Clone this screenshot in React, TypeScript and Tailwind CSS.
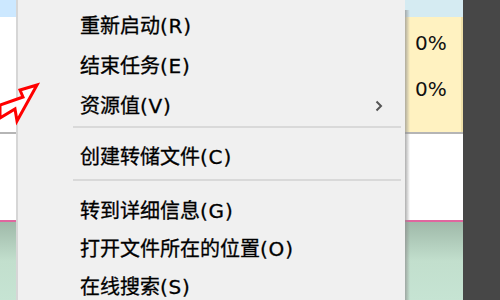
import React from 'react';

const font = { fontFamily: '"Microsoft YaHei", "Noto Sans CJK SC", "Noto Sans", sans-serif' };

const Item: React.FC<{ label: string; hotkey: string; sub?: boolean; h?: string }> = ({ label, hotkey, sub, h = 'h-[40px]' }) => (
  <div className={`${h} flex items-center pl-[62px] pr-[22px] text-black justify-between`}>
    <span className="leading-none text-[20px] whitespace-nowrap [-webkit-text-stroke:0.3px_#000]">
      {label}
      <span className="font-['DejaVu_Sans'] text-[20px] tracking-[0.8px]">({hotkey})</span>
    </span>
    {sub && (
      <svg width="8" height="12" viewBox="0 0 8 12" className="mt-[1px]">
        <path d="M1.5 1.5 L6 6 L1.5 10.5" fill="none" stroke="#555" strokeWidth="2" />
      </svg>
    )}
  </div>
);

const Sep: React.FC<{ cls: string }> = ({ cls }) => (
  <div className={`${cls} pl-[55px] pr-[4px]`}>
    <div className="h-[2px] w-full bg-[#d9d9d9]" />
  </div>
);

const Bands: React.FC<{ top: string; children?: React.ReactNode; band: string }> = ({ top, band, children }) => (
  <div className="flex flex-col h-full">
    <div className={`h-[17px] ${top}`} />
    <div className={`flex-none h-[115px] ${band}`}>{children}</div>
    <div className="h-[2px] bg-[#b5b5b5]" />
    <div className="h-[86px] bg-white" />
    <div className="h-[2px] bg-[#e0679f]" />
    <div className="flex-1 bg-gradient-to-b from-[#9fb9a9] via-[#c2dfcd] to-[#c6e4d3]" />
  </div>
);

export default function App() {
  return (
    <div className="relative w-[500px] h-[300px] overflow-hidden flex bg-white" style={font}>
      <div className="w-[16px] h-full">
        <Bands top="bg-[#cce8ff]" band="bg-white" />
      </div>

      <div className="w-[389px] h-full bg-[#f0f0f0] border-l-2 border-[#d6d6d6] pt-[5px]">
        <Item label="重新启动" hotkey="R" />
        <Item label="结束任务" hotkey="E" />
        <Item label="资源值" hotkey="V" sub />
        <Sep cls="h-[11px] pt-[1px]" />
        <Item label="创建转储文件" hotkey="C" />
        <Sep cls="h-[15px] pt-[3px]" />
        <Item label="转到详细信息" hotkey="G" h="h-[38px]" />
        <Item label="打开文件所在的位置" hotkey="O" h="h-[38px]" />
        <Item label="在线搜索" hotkey="S" h="h-[38px]" />
      </div>

      <div className="relative w-[58px] h-full">
        <Bands top="bg-[#d5ebf2]" band="bg-[#fff2c1] border-r-2 border-[#efe0a8]">
          <div className="flex flex-col pl-[10px] pt-[16px] gap-[26px] text-[20px] text-[#111] font-['DejaVu_Sans'] leading-none">
            <div>0%</div>
            <div>0%</div>
          </div>
        </Bands>
        <div className="absolute left-0 top-[10px] bottom-0 w-[5px] bg-gradient-to-r from-[#8d8d8d] to-transparent opacity-70" />
      </div>

      <div className="flex-1 h-full bg-[#474747]" />

      <svg className="absolute left-0 top-0" width="60" height="140" viewBox="0 0 60 140">
        <polygon
          points="37,85 20,90 23,97 0,105 0,118 15,109 17,121"
          fill="white"
          stroke="#ff0000"
          strokeWidth="3"
          strokeLinejoin="miter"
        />
      </svg>
    </div>
  );
}
